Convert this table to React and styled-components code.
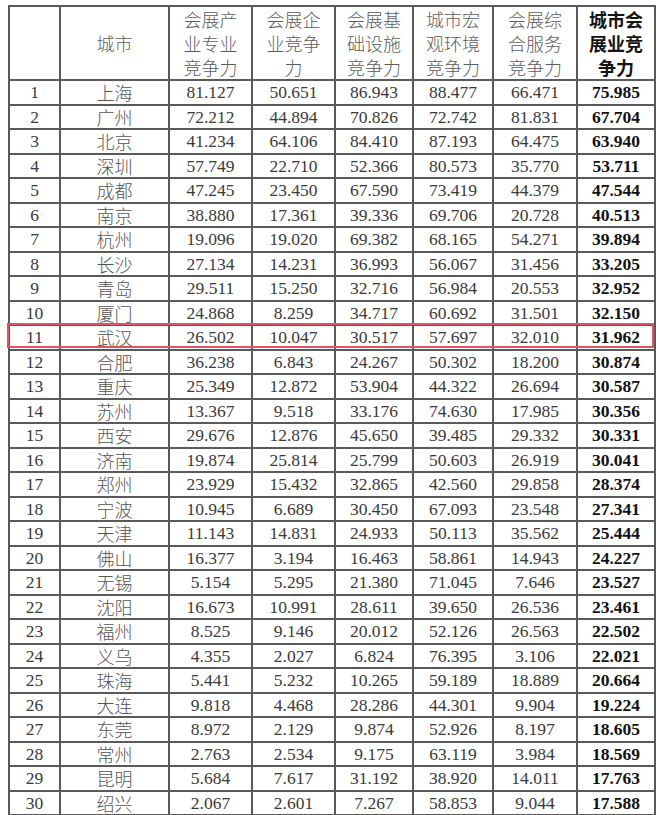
import styled, { createGlobalStyle } from "styled-components";

const GlobalStyle = createGlobalStyle`
  html, body {
    margin: 0;
    padding: 0;
    background: #ffffff;
    overflow: hidden;
  }
`;

const Page = styled.div`
  padding: 5px 0 0 8px;
  font-family: "Liberation Serif", "Noto Sans CJK SC", serif;
`;

const Frame = styled.div`
  position: relative;
  width: 646px;
`;

const Table = styled.table`
  width: 646px;
  table-layout: fixed;
  border-collapse: collapse;
`;

const HeadRow = styled.tr`
  height: 71px;
`;

const Row = styled.tr`
  height: 24.5px;
`;

const HeadCell = styled.th`
  border: 2px solid #5a5a5a;
  padding: 0;
  text-align: center;
  vertical-align: middle;
  font-family: "Noto Sans CJK SC", sans-serif;
  font-size: 18px;
  line-height: 24px;
  font-weight: ${(p) => (p.$bold ? 700 : 300)};
  color: ${(p) => (p.$bold ? "#141414" : "#5c5c5c")};
`;

const Cell = styled.td`
  border: 2px solid #5a5a5a;
  padding: 0;
  text-align: center;
  vertical-align: middle;
  white-space: nowrap;
  font-family: ${(p) =>
    p.$cjk
      ? `"Noto Sans CJK SC", sans-serif`
      : `"Liberation Serif", "Noto Sans CJK SC", serif`};
  font-size: ${(p) => (p.$cjk ? "18px" : "17.5px")};
  font-weight: ${(p) => (p.$bold ? 700 : p.$cjk ? 300 : 400)};
  color: ${(p) => (p.$bold ? "#111111" : p.$cjk ? "#555555" : "#3a3a3a")};
  line-height: 20px;
`;

const Highlight = styled.div`
  position: absolute;
  left: -1px;
  top: 318px;
  width: 643px;
  height: 21px;
  border: 2px solid #e05561;
  pointer-events: none;
`;

const widths = [51, 109, 83, 83, 78, 80, 84, 78];

const headers = [
  [],
  ["城市"],
  ["会展产", "业专业", "竞争力"],
  ["会展企", "业竞争", "力"],
  ["会展基", "础设施", "竞争力"],
  ["城市宏", "观环境", "竞争力"],
  ["会展综", "合服务", "竞争力"],
  ["城市会", "展业竞", "争力"],
];

const rows = [
  ["上海", "81.127", "50.651", "86.943", "88.477", "66.471", "75.985"],
  ["广州", "72.212", "44.894", "70.826", "72.742", "81.831", "67.704"],
  ["北京", "41.234", "64.106", "84.410", "87.193", "64.475", "63.940"],
  ["深圳", "57.749", "22.710", "52.366", "80.573", "35.770", "53.711"],
  ["成都", "47.245", "23.450", "67.590", "73.419", "44.379", "47.544"],
  ["南京", "38.880", "17.361", "39.336", "69.706", "20.728", "40.513"],
  ["杭州", "19.096", "19.020", "69.382", "68.165", "54.271", "39.894"],
  ["长沙", "27.134", "14.231", "36.993", "56.067", "31.456", "33.205"],
  ["青岛", "29.511", "15.250", "32.716", "56.984", "20.553", "32.952"],
  ["厦门", "24.868", "8.259", "34.717", "60.692", "31.501", "32.150"],
  ["武汉", "26.502", "10.047", "30.517", "57.697", "32.010", "31.962"],
  ["合肥", "36.238", "6.843", "24.267", "50.302", "18.200", "30.874"],
  ["重庆", "25.349", "12.872", "53.904", "44.322", "26.694", "30.587"],
  ["苏州", "13.367", "9.518", "33.176", "74.630", "17.985", "30.356"],
  ["西安", "29.676", "12.876", "45.650", "39.485", "29.332", "30.331"],
  ["济南", "19.874", "25.814", "25.799", "50.603", "26.919", "30.041"],
  ["郑州", "23.929", "15.432", "32.865", "42.560", "29.858", "28.374"],
  ["宁波", "10.945", "6.689", "30.450", "67.093", "23.548", "27.341"],
  ["天津", "11.143", "14.831", "24.933", "50.113", "35.562", "25.444"],
  ["佛山", "16.377", "3.194", "16.463", "58.861", "14.943", "24.227"],
  ["无锡", "5.154", "5.295", "21.380", "71.045", "7.646", "23.527"],
  ["沈阳", "16.673", "10.991", "28.611", "39.650", "26.536", "23.461"],
  ["福州", "8.525", "9.146", "20.012", "52.126", "26.563", "22.502"],
  ["义乌", "4.355", "2.027", "6.824", "76.395", "3.106", "22.021"],
  ["珠海", "5.441", "5.232", "10.265", "59.189", "18.889", "20.664"],
  ["大连", "9.818", "4.468", "28.286", "44.301", "9.904", "19.224"],
  ["东莞", "8.972", "2.129", "9.874", "52.926", "8.197", "18.605"],
  ["常州", "2.763", "2.534", "9.175", "63.119", "3.984", "18.569"],
  ["昆明", "5.684", "7.617", "31.192", "38.920", "14.011", "17.763"],
  ["绍兴", "2.067", "2.601", "7.267", "58.853", "9.044", "17.588"],
];

export default function App() {
  return (
    <Page>
      <GlobalStyle />
      <Frame>
        <Table>
          <colgroup>
            {widths.map((w, i) => (
              <col key={i} style={{ width: w }} />
            ))}
          </colgroup>
          <thead>
            <HeadRow>
              {headers.map((lines, i) => (
                <HeadCell key={i} $bold={i === headers.length - 1}>
                  {lines.map((line, j) => (
                    <div key={j}>{line}</div>
                  ))}
                </HeadCell>
              ))}
            </HeadRow>
          </thead>
          <tbody>
            {rows.map((row, idx) => (
              <Row key={idx}>
                <Cell>{idx + 1}</Cell>
                <Cell $cjk>{row[0]}</Cell>
                {row.slice(1).map((v, j) => (
                  <Cell key={j} $bold={j === row.length - 2}>
                    {v}
                  </Cell>
                ))}
              </Row>
            ))}
            <Row>
              {widths.map((_, i) => (
                <Cell key={i} />
              ))}
            </Row>
          </tbody>
        </Table>
        <Highlight />
      </Frame>
    </Page>
  );
}
